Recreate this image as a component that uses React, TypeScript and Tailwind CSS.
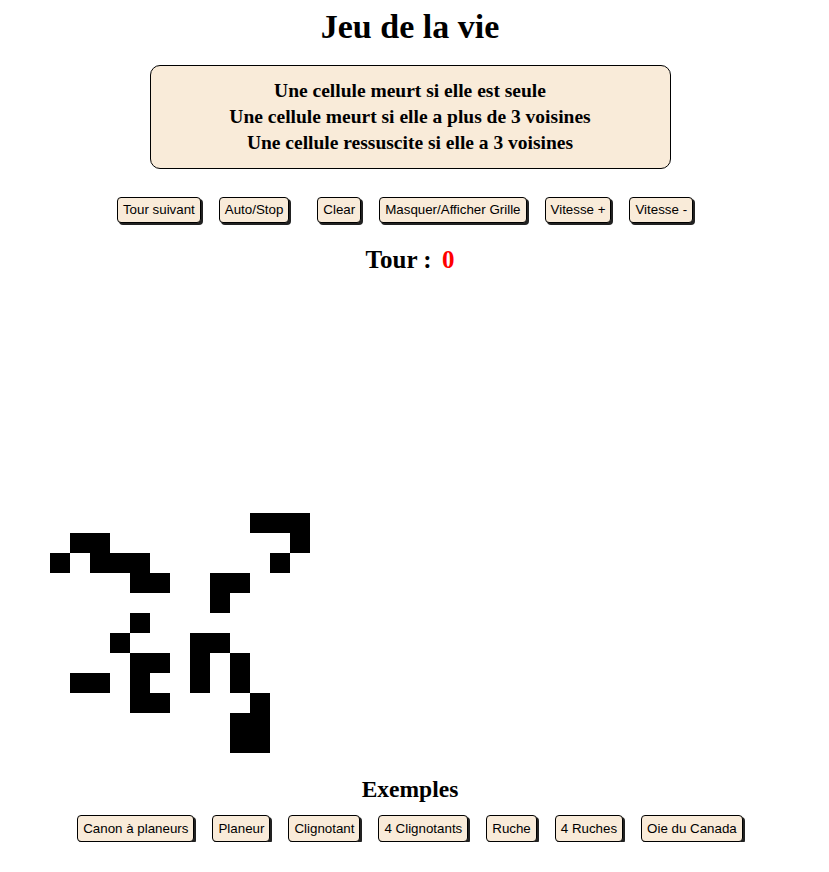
const serif = { fontFamily: '"Liberation Serif", "Times New Roman", serif' };

const controls = ["Tour suivant", "Auto/Stop", "Clear", "Masquer/Afficher Grille", "Vitesse +", "Vitesse -"];
const exemples = ["Canon à planeurs", "Planeur", "Clignotant", "4 Clignotants", "Ruche", "4 Ruches", "Oie du Canada"];

// live cells, in page pixels (20px cells)
const cells: [number, number][] = [
  [250, 513], [270, 513], [290, 513],
  [70, 533], [90, 533], [290, 533],
  [50, 553], [90, 553], [110, 553], [130, 553], [270, 553],
  [130, 573], [150, 573], [210, 573], [230, 573],
  [210, 593],
  [130, 613],
  [110, 633], [190, 633], [210, 633],
  [130, 653], [150, 653], [190, 653], [230, 653],
  [70, 673], [90, 673], [130, 673], [190, 673], [230, 673],
  [130, 693], [150, 693], [250, 693],
  [230, 713], [250, 713],
  [230, 733], [250, 733],
];

const GRID_TOP = 283;

function Btn({ label, className = "" }: { label: string; className?: string }) {
  return (
    <button
      className={`h-[26px] px-[5px] rounded-[4px] border border-black bg-[#f9ebd9] text-[13.33px] text-black shadow-[2px_2px_0_#222] ${className}`}
      style={{ fontFamily: '"Liberation Sans", Arial, sans-serif' }}
    >
      {label}
    </button>
  );
}

export default function App() {
  return (
    <div className="w-[820px] bg-white text-black" style={serif}>
      <h1 className="pt-[8px] text-center text-[34px] leading-[38px] font-bold">Jeu de la vie</h1>
      <div className="mx-auto mt-[19px] w-[521px] h-[104px] rounded-[10px] border border-black bg-[#f9ebd9] flex flex-col items-center justify-center text-[19.5px] leading-[26px] font-bold">
        <div>Une cellule meurt si elle est seule</div>
        <div>Une cellule meurt si elle a plus de 3 voisines</div>
        <div>Une cellule ressuscite si elle a 3 voisines</div>
      </div>
      <div className="mt-[28px] pr-[10px] flex justify-center gap-[18px]">
        {controls.map((c) => (
          <Btn key={c} label={c} className={c === "Clear" ? "ml-[10px]" : ""} />
        ))}
      </div>
      <div className="mt-[23px] text-center text-[25px] leading-[28px] font-bold">
        Tour : <span className="ml-[4px] text-[#ff0000]">0</span>
      </div>
      <svg width="820" height="490" className="block mt-[9px]">
        {cells.map(([x, y], i) => (
          <rect key={i} x={x} y={y - GRID_TOP} width="20" height="20" fill="#000" />
        ))}
      </svg>
      <h2 className="mt-[2px] text-center text-[23.5px] leading-[28px] font-bold">Exemples</h2>
      <div className="mt-[12px] flex justify-center gap-[18px]">
        {exemples.map((c) => (
          <Btn key={c} label={c} className="h-[27px]" />
        ))}
      </div>
    </div>
  );
}
